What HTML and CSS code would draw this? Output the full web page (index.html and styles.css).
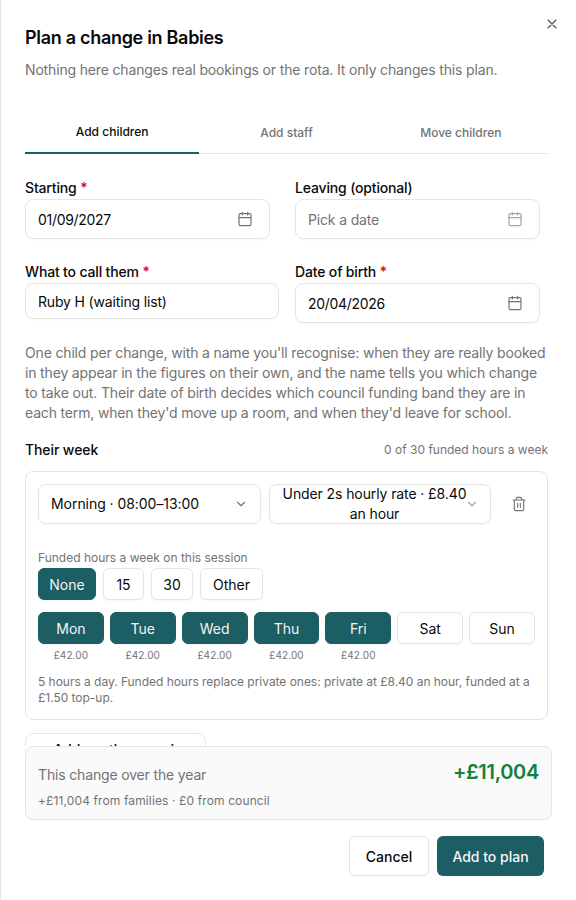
FILE: index.html
```html
<!DOCTYPE html>
<html lang="en">
<head>
<meta charset="utf-8">
<title>Plan a change in Babies</title>
<link rel="stylesheet" href="styles.css">
</head>
<body>
<svg class="defs" width="0" height="0" aria-hidden="true">
  <symbol id="cal" viewBox="0 0 24 24"><path d="M8 2v4M16 2v4M3 10h18" fill="none" stroke="currentColor" stroke-width="1.75" stroke-linecap="round" stroke-linejoin="round"/><rect x="3" y="4" width="18" height="18" rx="2" fill="none" stroke="currentColor" stroke-width="1.75"/></symbol>
  <symbol id="chev" viewBox="0 0 24 24"><path d="m6 9 6 6 6-6" fill="none" stroke="currentColor" stroke-width="2" stroke-linecap="round" stroke-linejoin="round"/></symbol>
</svg>
<main class="panel">
  <button class="close" aria-label="Close"><svg viewBox="0 0 24 24" width="16" height="16"><path d="M18 6 6 18M6 6l12 12" fill="none" stroke="currentColor" stroke-width="1.75" stroke-linecap="round"/></svg></button>
  <div class="scroll">
    <h1 class="title">Plan a change in Babies</h1>
    <p class="sub">Nothing here changes real bookings or the rota. It only changes this plan.</p>
    <div class="tabs">
      <div class="tab active">Add children</div>
      <div class="tab">Add staff</div>
      <div class="tab">Move children</div>
    </div>
    <div class="fields first">
      <div class="field">
        <label class="label">Starting <span class="req">*</span></label>
        <div class="input date"><span>01/09/2027</span><svg class="ico"><use href="#cal"/></svg></div>
      </div>
      <div class="field">
        <label class="label">Leaving (optional)</label>
        <div class="input date muted"><span>Pick a date</span><svg class="ico"><use href="#cal"/></svg></div>
      </div>
    </div>
    <div class="fields second">
      <div class="field">
        <label class="label">What to call them <span class="req">*</span></label>
        <div class="input text"><span>Ruby H (waiting list)</span></div>
      </div>
      <div class="field">
        <label class="label">Date of birth <span class="req">*</span></label>
        <div class="input date"><span>20/04/2026</span><svg class="ico"><use href="#cal"/></svg></div>
      </div>
    </div>
    <p class="help">One child per change, with a name you'll recognise: when they are really booked in they appear in the figures on their own, and the name tells you which change to take out. Their date of birth decides which council funding band they are in each term, when they'd move up a room, and when they'd leave for school.</p>
    <div class="week-head"><span class="week-title">Their week</span><span class="week-count">0 of 30 funded hours a week</span></div>
    <section class="card">
      <div class="selects">
        <div class="select sel-a"><span>Morning · 08:00–13:00</span><svg class="chev"><use href="#chev"/></svg></div>
        <div class="select sel-b"><span>Under 2s hourly rate · £8.40 an hour</span><svg class="chev"><use href="#chev"/></svg></div>
        <button class="trash" aria-label="Remove"><svg viewBox="0 0 24 24" width="16" height="16" fill="none" stroke="currentColor" stroke-width="1.75" stroke-linecap="round" stroke-linejoin="round"><path d="M3 6h18M19 6v14a2 2 0 0 1-2 2H7a2 2 0 0 1-2-2V6M8 6V4a2 2 0 0 1 2-2h4a2 2 0 0 1 2 2v2M10 11v6M14 11v6"/></svg></button>
      </div>
      <div class="funded-label">Funded hours a week on this session</div>
      <div class="chips">
        <button class="chip on c-none">None</button>
        <button class="chip c-15">15</button>
        <button class="chip c-30">30</button>
        <button class="chip c-other">Other</button>
      </div>
      <div class="days">
        <div class="day"><button class="chip on">Mon</button><span class="price">£42.00</span></div>
        <div class="day"><button class="chip on">Tue</button><span class="price">£42.00</span></div>
        <div class="day"><button class="chip on">Wed</button><span class="price">£42.00</span></div>
        <div class="day"><button class="chip on">Thu</button><span class="price">£42.00</span></div>
        <div class="day"><button class="chip on">Fri</button><span class="price">£42.00</span></div>
        <div class="day"><button class="chip">Sat</button></div>
        <div class="day"><button class="chip">Sun</button></div>
      </div>
      <p class="note">5 hours a day. Funded hours replace private ones: private at £8.40 an hour, funded at a £1.50 top-up.</p>
    </section>
    <button class="add">+ Add another session</button>
  </div>
  <section class="summary">
    <div class="sum-top"><span class="sum-label">This change over the year</span><span class="sum-value">+£11,004</span></div>
    <div class="sum-detail">+£11,004 from families · £0 from council</div>
  </section>
  <footer class="actions">
    <button class="btn cancel">Cancel</button>
    <button class="btn primary">Add to plan</button>
  </footer>
</main>
</body>
</html>
```
FILE: styles.css
```css
* { box-sizing: border-box; }
html, body { margin: 0; height: 100%; }
body { font-family: Inter, "Liberation Sans", sans-serif; color: #0a0a0a; background: #fff; overflow: hidden; }
button { font: inherit; color: inherit; background: none; border: 0; padding: 0; }
p, h1 { margin: 0; }
.defs { position: absolute; }
.panel { position: relative; height: 900px; width: 576px; border-left: 1px solid #e5e5e5; display: flex; flex-direction: column; }
.close { position: absolute; top: 16px; right: 16px; width: 16px; height: 16px; color: #525252; display: flex; }
.scroll { height: 746px; overflow: hidden; padding: 28px 26px 0 24px; flex: none; }
.title { font-size: 18px; line-height: 20px; font-weight: 600; letter-spacing: -0.3px; }
.sub { margin-top: 12px; font-size: 14px; line-height: 20px; color: #737373; letter-spacing: -0.16px; }
.tabs { margin-top: 30px; display: flex; border-bottom: 1px solid #e5e5e5; height: 44px; width: 523px; }
.tab { flex: 1; font-size: 12px; font-weight: 500; color: #737373; display: flex; align-items: center; justify-content: center; margin-bottom: -1px; }
.tab.active { color: #0a0a0a; border-bottom: 2px solid #1b5e63; }
.fields { display: grid; grid-template-columns: 254px 254px; gap: 16px; }
.fields.first { margin-top: 25px; }
.fields.second { margin-top: 24px; align-items: start; }
.field { display: flex; flex-direction: column; gap: 2px; }
.label { font-size: 14px; line-height: 18px; font-weight: 500; letter-spacing: -0.16px; }
.req { color: #e7000b; }
.input { border: 1px solid #e5e5e5; border-radius: 8px; font-size: 14px; display: flex; align-items: center; justify-content: space-between; padding: 0 16px 0 12px; box-shadow: 0 1px 2px rgba(0,0,0,.04); letter-spacing: -0.16px; }
.date { height: 40px; width: 245px; letter-spacing: -0.3px; }
.text { height: 36px; }
.muted { color: #737373; letter-spacing: -0.16px; }
.ico { width: 16px; height: 16px; color: #737373; }
.muted .ico { color: #a3a3a3; }
.help { margin-top: 20px; font-size: 14px; line-height: 20px; color: #737373; letter-spacing: -0.16px; width: 524px; }
.week-head { margin-top: 16px; display: flex; justify-content: space-between; align-items: center; height: 20px; width: 523px; }
.week-title { font-size: 14px; font-weight: 500; letter-spacing: -0.1px; }
.week-count { font-size: 12px; color: #737373; }
.card { margin-top: 12px; border: 1px solid #e5e5e5; border-radius: 8px; padding: 12px; height: 249px; width: 523px; }
.selects { display: flex; align-items: center; gap: 8px; }
.select { height: 40px; border: 1px solid #e5e5e5; border-radius: 8px; font-size: 14px; line-height: 20px; display: flex; align-items: center; justify-content: space-between; box-shadow: 0 1px 2px rgba(0,0,0,.04); flex: none; }
.sel-a { width: 223px; padding: 0 12px; letter-spacing: -0.05px; }
.sel-b { width: 222px; padding: 0 11px 0 12px; text-align: center; letter-spacing: -0.1px; }
.chev { width: 14px; height: 14px; color: #737373; flex: none; }
.sel-b .chev { color: #a3a3a3; margin-left: -2px; }
.trash { width: 40px; height: 40px; color: #737373; display: flex; align-items: center; justify-content: center; flex: none; }
.funded-label { margin-top: 26px; font-size: 12px; line-height: 16px; color: #737373; }
.chips { display: flex; gap: 7px; margin-top: 2px; }
.chip { height: 32px; border: 1px solid #e5e5e5; border-radius: 6px; font-size: 14px; display: flex; align-items: center; justify-content: center; background: #fff; box-shadow: 0 1px 2px rgba(0,0,0,.04); }
.chip.on { background: #1b5e63; border-color: #1b5e63; color: #f5f5f5; }
.c-none { width: 58px; }
.c-15 { width: 41px; }
.c-30 { width: 42px; }
.c-other { width: 63px; }
.days { display: grid; grid-template-columns: repeat(7, 1fr); column-gap: 6px; margin-top: 12px; width: 497px; }
.day { display: flex; flex-direction: column; align-items: stretch; }
.price { margin-top: 4px; font-size: 10px; line-height: 14px; color: #737373; text-align: center; letter-spacing: 0.1px; }
.note { margin-top: 12px; font-size: 12px; line-height: 16px; color: #737373; letter-spacing: -0.03px; }
.add { display: block; margin-top: 13px; width: 181px; height: 32px; border: 1px solid #e5e5e5; border-radius: 8px; font-size: 14px; font-weight: 500; }
.summary { margin-left: 24px; width: 527px; height: 74px; border: 1px solid #e5e5e5; border-radius: 8px; background: #fafafa; padding: 12px; flex: none; }
.sum-top { display: flex; justify-content: space-between; align-items: center; height: 30px; }
.sum-label { font-size: 14px; color: #737373; letter-spacing: -0.16px; }
.sum-value { font-size: 20px; font-weight: 600; color: #15803d; letter-spacing: -0.3px; margin-bottom: 4px; }
.sum-detail { margin-top: 4px; font-size: 12px; line-height: 16px; color: #737373; letter-spacing: 0.12px; }
.actions { display: flex; justify-content: flex-end; gap: 8px; margin-top: 16px; padding-right: 32px; }
.btn { height: 40px; border-radius: 6px; font-size: 14px; font-weight: 500; }
.cancel { width: 80px; border: 1px solid #e5e5e5; box-shadow: 0 1px 2px rgba(0,0,0,.04); }
.primary { width: 107px; background: #1b5e63; color: #f5f5f5; }
```
